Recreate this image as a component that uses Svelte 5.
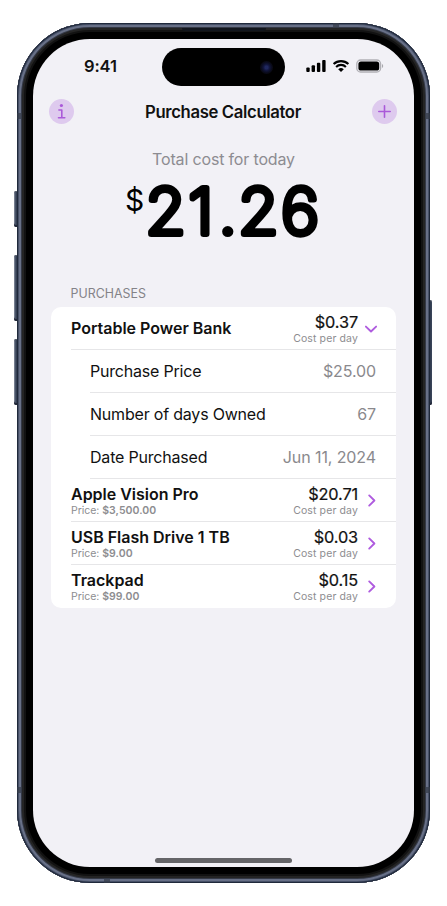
<script>
  const details = [
    { label: 'Purchase Price', value: '$25.00' },
    { label: 'Number of days Owned', value: '67' },
    { label: 'Date Purchased', value: 'Jun 11, 2024' }
  ];
  const purchases = [
    { name: 'Portable Power Bank', cost: '$0.37', open: true },
    { name: 'Apple Vision Pro', price: '$3,500.00', cost: '$20.71' },
    { name: 'USB Flash Drive 1 TB', price: '$9.00', cost: '$0.03' },
    { name: 'Trackpad', price: '$99.00', cost: '$0.15' }
  ];
</script>

<div class="stage">
  <i class="button action"></i>
  <i class="button up"></i>
  <i class="button down"></i>
  <i class="button power"></i>
  <div class="phone">
    <i class="band b1"></i><i class="band b2"></i><i class="band b3"></i>
    <i class="band b4"></i><i class="band b5"></i><i class="band b6"></i>
    <i class="speaker"></i>
    <main class="screen">
      <div class="status">
        <span class="time">9:41</span>
        <div class="island"><i class="lens"></i></div>
        <svg class="signals" width="78" height="14" viewBox="0 0 78 14">
          <rect x="0.3" y="8.6" width="3.4" height="4.4" rx="1" />
          <rect x="5.6" y="6.3" width="3.4" height="6.7" rx="1" />
          <rect x="10.9" y="3.8" width="3.4" height="9.2" rx="1" />
          <rect x="16.2" y="1" width="3.4" height="12" rx="1" />
          <g fill="none" stroke="#000" stroke-width="2.1">
            <path d="M27.6 5.1a10.8 10.8 0 0 1 14.8 0" />
            <path d="M30.1 7.9a7 7 0 0 1 9.8 0" />
          </g>
          <path d="M32.2 10.3a4 4 0 0 1 5.6 0L35 13z" />
          <rect x="50.8" y="1" width="23.8" height="12" rx="3.8" fill="#f2f1f6" stroke="#b1b0b5" stroke-width="1.3" />
          <rect x="52.4" y="2.4" width="20.8" height="9.2" rx="2.6" />
          <path d="M76 5v4c1.6-.5 1.6-3.5 0-4z" fill="#aaa9ae" />
        </svg>
      </div>

      <header>
        <button aria-label="Info">
          <svg width="25" height="25" viewBox="0 0 25 25" fill="none" stroke="#aa59d9" stroke-width="1.6" stroke-linecap="round" stroke-linejoin="round">
            <path d="M9.9 11h2.9v7.6M9.5 18.8h6.3" />
            <circle cx="12.4" cy="6.5" r="1.6" fill="#aa59d9" stroke="none" />
          </svg>
        </button>
        <h1>Purchase Calculator</h1>
        <button aria-label="Add">
          <svg width="25" height="25" viewBox="0 0 25 25" fill="none" stroke="#aa59d9" stroke-width="1.6" stroke-linecap="round">
            <path d="M12.5 6.8v11.4M6.8 12.5h11.4" />
          </svg>
        </button>
      </header>

      <section class="total">
        <p>Total cost for today</p>
        <svg class="amount" width="210" height="76" viewBox="0 0 210 76">
          <text class="currency" x="6" y="35">$</text>
          <text class="figure" transform="scale(1.03 1)" x="25.7 67.6 96.9 115.8 157.4" y="57.5">21.26</text>
        </svg>
      </section>

      <h2>PURCHASES</h2>
      <div class="card">
        {#each purchases as item}
          <div class="row">
            <div class="left">
              <b>{item.name}</b>
              {#if item.price}<small class="price">Price: <strong>{item.price}</strong></small>{/if}
            </div>
            <div class="right">
              <span class="cost">{item.cost}</span>
              <small>Cost per day</small>
            </div>
            <svg class="chevron" width="14" height="14" viewBox="0 0 14 14" fill="none" stroke="#af5cdf" stroke-width="1.9" stroke-linecap="round" stroke-linejoin="round">
              <path d={item.open ? 'M1.9 4.6 7 9.5l5.1-4.9' : 'M5.2 1.4 10.4 6.5l-5.2 5.1'} />
            </svg>
          </div>
          {#if item.open}
            {#each details as d}
              <div class="row detail">
                <span>{d.label}</span>
                <span class="value">{d.value}</span>
              </div>
            {/each}
          {/if}
        {/each}
      </div>
      <div class="home"></div>
    </main>
  </div>
</div>

<style>
  :global(body) { background: #fff; }
  .stage {
    position: relative;
    box-sizing: border-box;
    width: 447px;
    height: 906px;
    padding: 23px 0 0 17px;
    overflow: hidden;
    font-family: Inter, 'Liberation Sans', sans-serif;
    color: #111;
  }
  .phone {
    position: relative;
    box-sizing: border-box;
    width: 413px;
    height: 860px;
    padding: 16px;
    border-radius: 73px;
    background: #000;
    box-shadow:
      inset 0 0 0 1px #20293b,
      inset 0 0 0 2px #465067,
      inset 0 0 0 4px #687087,
      inset 0 0 0 5px #343946,
      inset 0 0 0 7px #242424,
      inset 0 0 0 9px #121212;
  }
  .screen {
    position: relative;
    display: flex;
    flex-direction: column;
    box-sizing: border-box;
    width: 381px;
    height: 828px;
    border-radius: 57px;
    background: #f2f1f6;
    overflow: hidden;
  }
  .button {
    position: absolute;
    left: 14px;
    width: 4px;
    border-radius: 2px 0 0 2px;
    background: linear-gradient(90deg, #8c93a3, #3c475c 45%, #263044);
    box-shadow: inset 0 1px #59606e, inset 0 -2px #222838;
  }
  .action { top: 191px; height: 36px; }
  .up { top: 255px; height: 66px; }
  .down { top: 339px; height: 66px; }
  .power {
    left: 429px;
    top: 300px;
    height: 105px;
    width: 3px;
    border-radius: 0 2px 2px 0;
    background: linear-gradient(90deg, #263044, #3c475c);
  }
  .band { position: absolute; background: #353c4a; opacity: .75; }
  .b1 { left: 0; top: 90px; width: 5px; height: 6px; }
  .b2 { right: 0; top: 90px; width: 5px; height: 6px; }
  .b3 { left: 0; bottom: 90px; width: 5px; height: 6px; }
  .b4 { right: 0; bottom: 90px; width: 5px; height: 6px; }
  .b5 { right: 91px; top: 0; width: 6px; height: 5px; }
  .b6 { left: 87px; bottom: 0; width: 6px; height: 5px; }
  .speaker {
    position: absolute;
    left: 165px;
    top: 5px;
    width: 84px;
    height: 3px;
    border-radius: 0 0 3px 3px;
    background: #11151c;
  }
  .status {
    display: flex;
    align-items: flex-start;
    height: 55px;
    padding-left: 51px;
  }
  .time {
    width: 78px;
    margin-top: 17px;
    font-size: 16.5px;
    line-height: 20px;
    font-weight: 600;
    letter-spacing: -0.1px;
  }
  .island {
    position: relative;
    width: 123px;
    height: 38px;
    margin-top: 9px;
    border-radius: 19px;
    background: #000;
  }
  .lens {
    position: absolute;
    right: 12px;
    top: 13px;
    width: 13px;
    height: 13px;
    border-radius: 50%;
    background: radial-gradient(circle, #20285e 0 15%, #10143a 35%, #090a18 60%, #0a070c 100%);
  }
  .signals { margin: 20px 0 0 21px; }
  header {
    display: flex;
    align-items: center;
    justify-content: space-between;
    height: 35px;
    padding: 0 17px 0 16px;
  }
  button {
    display: flex;
    width: 25px;
    height: 25px;
    padding: 0;
    border: 0;
    border-radius: 50%;
    background: #decaee;
  }
  h1 {
    margin: 0;
    font-size: 16.7px;
    font-weight: 600;
    line-height: 22px;
    letter-spacing: -0.36px;
  }
  .total { display: flex; flex-direction: column; align-items: center; }
  .total p {
    margin: 20px 0 0;
    font-size: 16px;
    line-height: 20px;
    color: #8d8c91;
    letter-spacing: -0.16px;
  }
  .amount { margin: 7px 0 -7px; overflow: visible; }
  .currency { font-size: 30px; font-weight: 400; fill: #000; }
  .figure {
    font-size: 63.3px;
    font-weight: 200;
    fill: #000;
    stroke: #000;
    stroke-width: 6px;
    stroke-linejoin: round;
    stroke-linecap: round;
  }
  h2 {
    margin: 41px 0 0 37.5px;
    height: 21px;
    font-size: 12.4px;
    font-weight: 400;
    line-height: 16px;
    letter-spacing: 0.03px;
    color: #848388;
  }
  .card {
    width: 345px;
    margin-left: 18px;
    border-radius: 10px;
    background: #fff;
    overflow: hidden;
  }
  .row {
    display: flex;
    align-items: center;
    box-sizing: border-box;
    height: 43px;
    margin-left: 20px;
    padding-right: 18px;
    border-bottom: 1px solid #e6e6e8;
  }
  .row:last-child { height: 42.5px; border-bottom: 0; }
  .left, .right { display: flex; flex-direction: column; padding-top: 2px; }
  .row:first-child .left { padding-top: 0; }
  .left { flex: 1; }
  .right { align-items: flex-end; margin-right: 6px; }
  b {
    font-size: 16px;
    font-weight: 600;
    line-height: 19px;
    letter-spacing: -0.01px;
  }
  .cost { font-size: 16.3px; line-height: 19px; letter-spacing: -0.12px; -webkit-text-stroke: 0.2px #111; }
  small {
    font-size: 10.5px;
    line-height: 13px;
    color: #8d8d90;
    letter-spacing: 0.12px;
  }
  .price { letter-spacing: -0.04px; }
  small strong { font-weight: 600; letter-spacing: 0.06px; }
  .chevron { flex: none; margin-top: 2px; }
  .detail {
    justify-content: space-between;
    margin-left: 39px;
    padding-right: 20px;
    font-size: 16px;
    letter-spacing: -0.2px;
  }
  .value { color: #8a898d; letter-spacing: -0.1px; }
  .home {
    width: 137px;
    height: 5px;
    margin: auto auto 4px;
    border-radius: 3px;
    background: #656568;
  }
</style>
